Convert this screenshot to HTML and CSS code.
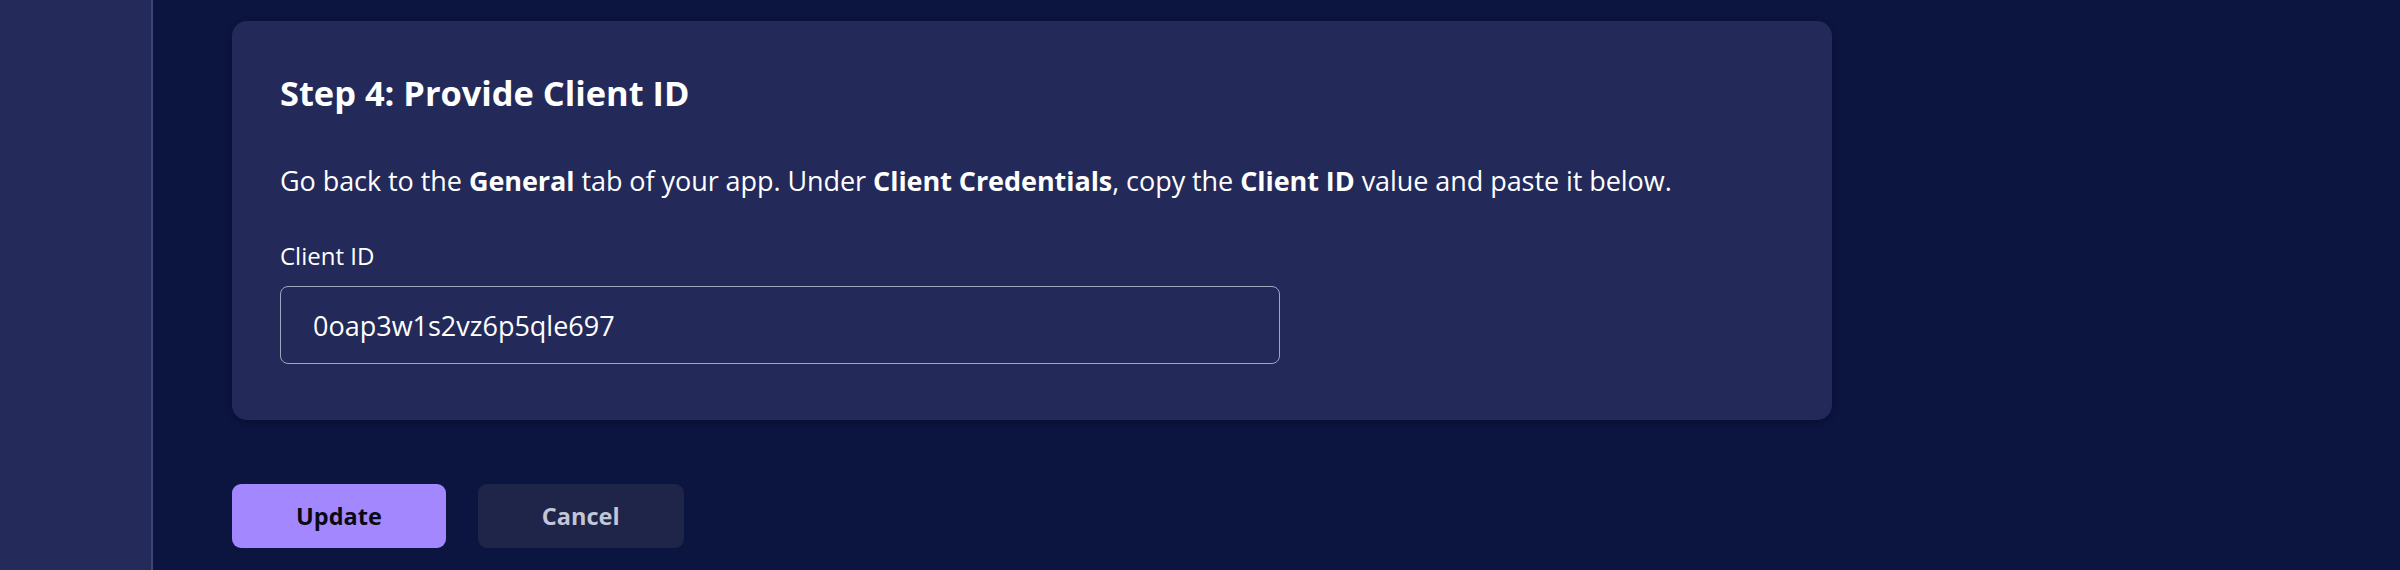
FILE: index.html
```html
<!DOCTYPE html>
<html lang="en">
<head>
<meta charset="utf-8">
<title>Provide Client ID</title>
<link rel="stylesheet" href="styles.css">
</head>
<body>
<div class="app">
  <aside class="sidebar"></aside>
  <main class="main">
    <section class="card">
      <h2 class="card-title">Step 4: Provide Client ID</h2>
      <p class="card-text">Go back to the <strong>General</strong> tab of your app. Under <strong>Client Credentials</strong>, copy the <strong>Client ID</strong> value and paste it below.</p>
      <div class="field">
        <label class="field-label" for="client-id">Client ID</label>
        <input class="field-input" id="client-id" type="text" value="0oap3w1s2vz6p5qle697">
      </div>
    </section>
    <div class="actions">
      <button class="btn btn-primary" type="button">Update</button>
      <button class="btn btn-secondary" type="button">Cancel</button>
    </div>
  </main>
</div>
</body>
</html>
```

FILE: styles.css
```css
* { box-sizing: border-box; }

html, body {
  margin: 0;
  height: 100%;
  overflow: hidden;
}

body {
  background: #0c1440;
  color: #ffffff;
  font-family: "Open Sans", "Noto Sans", sans-serif;
}

.app {
  display: flex;
  min-height: 570px;
}

.sidebar {
  width: 153px;
  flex: none;
  background: #242a59;
  border-right: 2px solid #3d4477;
}

.main {
  flex: 1;
  padding: 21px 0 0 79px;
}

.card {
  width: 1600px;
  background: #232a5a;
  border-radius: 15px;
  padding: 48px 48px 56px;
  box-shadow: 0 2px 6px rgba(0, 0, 0, 0.25);
}

.card-title {
  margin: 0;
  font-size: 34.4px;
  line-height: 48px;
  font-weight: 700;
}

.card-text {
  margin: 44px 0 0;
  font-size: 27px;
  line-height: 40px;
  font-weight: 400;
  letter-spacing: -0.06px;
}

.card-text strong {
  font-weight: 700;
}

.field {
  margin-top: 37px;
  display: flex;
  flex-direction: column;
  gap: 12px;
}

.field-label {
  font-size: 24px;
  line-height: 36px;
  font-weight: 500;
}

.field-input {
  width: 1000px;
  height: 78px;
  padding: 0 32px;
  background: transparent;
  border: 1.5px solid #a2a6bc;
  border-radius: 8px;
  color: #ffffff;
  font-family: inherit;
  font-size: 27px;
  outline: none;
}

.actions {
  display: flex;
  gap: 32px;
  margin-top: 64px;
}

.btn {
  height: 64px;
  padding: 0 64px;
  border: none;
  border-radius: 9px;
  font-family: inherit;
  font-size: 23.5px;
  font-weight: 700;
  cursor: pointer;
}

.btn-primary {
  background: #a387fe;
  color: #0a0a14;
}

.btn-secondary {
  background: #1f2449;
  color: #c3c6d6;
}
```
